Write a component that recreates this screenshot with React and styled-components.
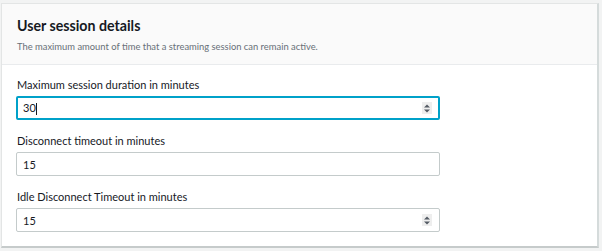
import React from 'react'
import styled, { createGlobalStyle } from 'styled-components'

const GlobalStyle = createGlobalStyle`
  html, body {
    margin: 0;
    padding: 0;
    background: #f2f3f3;
    font-family: Lato, 'Open Sans', 'Liberation Sans', sans-serif;
  }
`

const Page = styled.div`
  width: 602px;
  height: 251px;
  padding: 3px 3px 0 1px;
  box-sizing: border-box;
`

const Card = styled.div`
  background: #ffffff;
  border: 1px solid #e3e5e5;
  border-right: 2px solid #d5dbdb;
  border-bottom: 2px solid #c6cbcb;
  height: 245px;
  box-sizing: border-box;
`

const Header = styled.div`
  background: #fafafa;
  border-bottom: 1px solid #e9ebed;
  height: 61px;
  box-sizing: border-box;
  padding: 12px 15px 0;
`

const Title = styled.h2`
  margin: 0;
  font-size: 14.2px;
  font-weight: 700;
  color: #16191f;
  line-height: 20px;
`

const Subtitle = styled.p`
  margin: 4px 0 0;
  font-size: 9.4px;
  color: #687078;
  line-height: 14px;
`

const Body = styled.div`
  padding: 13px 15px 0 14px;
  display: flex;
  flex-direction: column;
  gap: 14px;
`

const Field = styled.div`
  display: flex;
  flex-direction: column;
  gap: 4px;
`

const Label = styled.label`
  font-size: 11px;
  color: #16191f;
  line-height: 14px;
  padding-left: 1px;
`

const InputBox = styled.div`
  width: 424px;
  height: 24px;
  box-sizing: border-box;
  display: flex;
  align-items: center;
  padding: 0 7px 0 6px;
  border: ${p => (p.focused ? '2px solid #00a1c9' : '1px solid #c4cbcb')};
  border-radius: 2px;
  background: #fff;
  ${p => p.focused && 'padding-left: 5px; padding-right: 6px;'}
`

const Value = styled.span`
  flex: 1;
  font-size: 11px;
  color: #16191f;
`

const Caret = styled.span`
  display: inline-block;
  width: 1px;
  height: 12px;
  background: #16191f;
  vertical-align: middle;
`

const Spinner = styled.div`
  width: 10px;
  height: 12px;
  background: #eeeeee;
  display: flex;
  align-items: center;
  justify-content: center;
`

function SpinIcon() {
  return (
    <svg width="6" height="9" viewBox="0 0 6 9">
      <path d="M0 3.5 L3 0.5 L6 3.5 Z" fill="#545b64" />
      <path d="M0 5.5 L3 8.5 L6 5.5 Z" fill="#545b64" />
    </svg>
  )
}

function NumberField({ label, value, focused, spinner }) {
  return (
    <Field>
      <Label>{label}</Label>
      <InputBox focused={focused}>
        <Value>
          {value}
          {focused && <Caret />}
        </Value>
        {spinner && (
          <Spinner>
            <SpinIcon />
          </Spinner>
        )}
      </InputBox>
    </Field>
  )
}

export default function App() {
  return (
    <>
      <GlobalStyle />
      <Page>
        <Card>
          <Header>
            <Title>User session details</Title>
            <Subtitle>The maximum amount of time that a streaming session can remain active.</Subtitle>
          </Header>
          <Body>
            <NumberField label="Maximum session duration in minutes" value="30" focused spinner />
            <NumberField label="Disconnect timeout in minutes" value="15" />
            <NumberField label="Idle Disconnect Timeout in minutes" value="15" spinner />
          </Body>
        </Card>
      </Page>
    </>
  )
}
